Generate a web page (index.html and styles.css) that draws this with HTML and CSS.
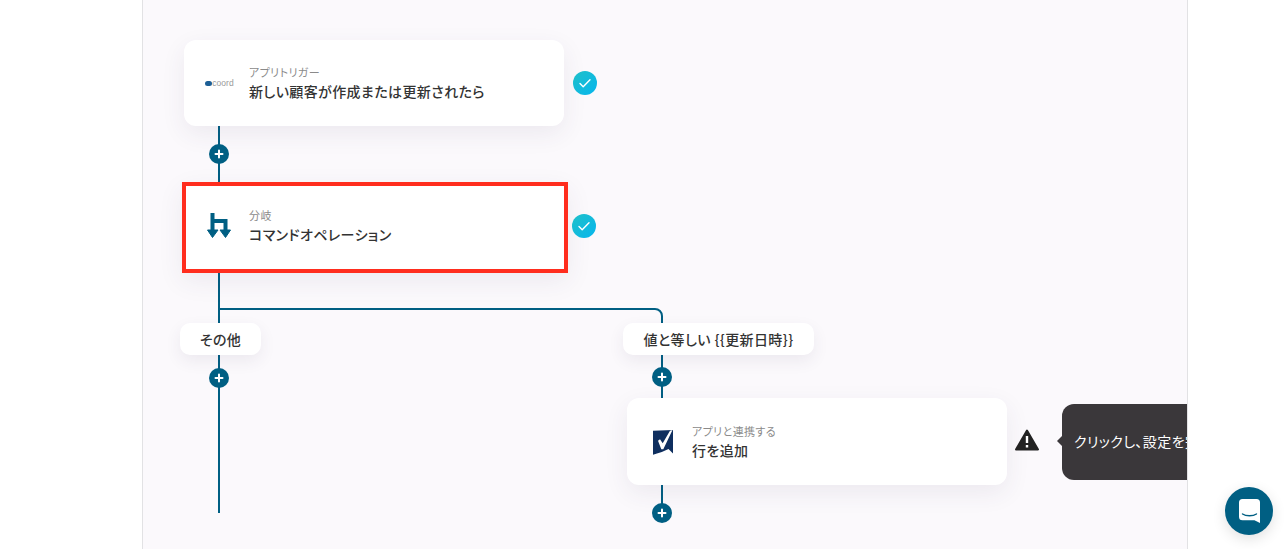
FILE: index.html
```html
<!DOCTYPE html>
<html lang="ja">
<head>
    <meta charset="UTF-8">
    <title>フローボット</title>
    <link rel="stylesheet" href="styles.css">
</head>
<body>
    <main class="canvas">
        <!-- Lineas de conexion -->
        <svg class="wires" width="1046" height="549" viewBox="0 0 1046 549" fill="none">
            <path d="M77 126V513" stroke="#005f83" stroke-width="2"/>
            <path d="M77 309H513a7 7 0 0 1 7 7V513" stroke="#005f83" stroke-width="2"/>
        </svg>

        <div class="card card-trigger">
            <div class="card-icon">
                <svg width="7" height="5" viewBox="0 0 7 5"><rect width="7" height="5" rx="2.5" fill="#1d5f96"/></svg>
                <span class="coord-logo">coord</span>
            </div>
            <div class="card-text">
                <span class="card-label">アプリトリガー</span>
                <span class="card-title">新しい顧客が作成または更新されたら</span>
            </div>
        </div>
        <span class="check check-trigger">
            <svg width="14" height="14" viewBox="0 0 14 14" fill="none"><path d="M2 7.5l3.2 3.2 6.8-7" stroke="#fff" stroke-width="1.4" stroke-linecap="round" stroke-linejoin="round"/></svg>
        </span>

        <span class="plus plus-a"><svg width="10" height="10" viewBox="0 0 10 10"><path d="M5 1.5v7M1.5 5h7" stroke="#fff" stroke-width="2" stroke-linecap="round"/></svg></span>

        <div class="card card-branch">
            <div class="card-icon">
                <svg width="24" height="25" viewBox="0 0 24 25" fill="#005f83">
                    <path d="M3.5 0h4v6H20.5v12h-4V10h-9v8h-4z"/>
                    <path d="M0.5 17h10.500L5.500 24.500zM13 17h10.500L18.500 24.500z" stroke="#005f83" stroke-linejoin="round"/>
                </svg>
            </div>
            <div class="card-text">
                <span class="card-label">分岐</span>
                <span class="card-title">コマンドオペレーション</span>
            </div>
        </div>
        <span class="check check-branch">
            <svg width="14" height="14" viewBox="0 0 14 14" fill="none"><path d="M2 7.5l3.2 3.2 6.8-7" stroke="#fff" stroke-width="1.4" stroke-linecap="round" stroke-linejoin="round"/></svg>
        </span>

        <span class="pill pill-other">その他</span>
        <span class="pill pill-value">値と等しい {{更新日時}}</span>

        <span class="plus plus-b"><svg width="10" height="10" viewBox="0 0 10 10"><path d="M5 1.5v7M1.5 5h7" stroke="#fff" stroke-width="2" stroke-linecap="round"/></svg></span>
        <span class="plus plus-c"><svg width="10" height="10" viewBox="0 0 10 10"><path d="M5 1.5v7M1.5 5h7" stroke="#fff" stroke-width="2" stroke-linecap="round"/></svg></span>

        <div class="card card-sheet">
            <div class="card-icon">
                <svg width="20" height="25" viewBox="0 0 20 25">
                    <path d="M0 .8L20 0V23.500L15.500 19Q8 23 0 24.700Z" fill="#0f2f5f"/>
                    <path d="M5 10.700L7 9.300L9.700 13.300L17 .7L19.500 0L10.300 19.300H8.300Z" fill="#fff"/>
                </svg>
            </div>
            <div class="card-text">
                <span class="card-label">アプリと連携する</span>
                <span class="card-title">行を追加</span>
            </div>
        </div>

        <span class="plus plus-d"><svg width="10" height="10" viewBox="0 0 10 10"><path d="M5 1.5v7M1.5 5h7" stroke="#fff" stroke-width="2" stroke-linecap="round"/></svg></span>

        <svg class="warn" width="24" height="22" viewBox="0 0 24 22">
            <path d="M12 1.5L23 20.5H1Z" fill="#222" stroke="#222" stroke-width="2" stroke-linejoin="round"/>
            <path d="M12 7v7M12 16v2.4" stroke="#fff" stroke-width="2.4"/>
        </svg>
        <div class="tip">クリックし、設定を完了してください</div>
    </main>

    <button class="chat" type="button" aria-label="チャット">
        <svg width="21" height="24" viewBox="0 0 21 24">
            <path d="M3.500 0h14a3.500 3.500 0 0 1 3.500 3.500V24l-5.500-2.800H3.500a3.500 3.500 0 0 1-3.500-3.500V3.500A3.500 3.500 0 0 1 3.500 0z" fill="#fff"/>
            <path d="M3.500 15c3.500 2.400 10.500 2.400 14 0" fill="none" stroke="#005f83" stroke-width="1.4" stroke-linecap="round"/>
        </svg>
    </button>
</body>
</html>
```

FILE: styles.css
```css
html, body {
    margin: 0;
    height: 100%;
}

body {
    position: relative;
    width: 1284px;
    height: 549px;
    overflow: hidden;
    background-color: #ffffff;
    font-family: "Noto Sans CJK JP", "Noto Sans", sans-serif;
    font-feature-settings: "palt";
    letter-spacing: 0.4px;
    color: #333;
}

/* Lienzo del flujo */
.canvas {
    position: absolute;
    left: 142px;
    top: 0;
    width: 1046px;
    height: 549px;
    box-sizing: border-box;
    overflow: hidden;
    background-color: #fbf9fc;
    border-left: 1px solid #e2e2e4;
    border-right: 1px solid #e2e2e4;
}

.wires {
    position: absolute;
    left: -1px;
    top: 0;
}

/* Tarjetas */
.card {
    position: absolute;
    width: 380px;
    height: 86px;
    display: flex;
    align-items: center;
    box-sizing: border-box;
    background-color: #fff;
    border-radius: 12px;
    box-shadow: 0 8px 24px rgba(60, 50, 90, 0.08);
}

.card-trigger {
    left: 41px;
    top: 40px;
}

.card-branch {
    left: 39px;
    top: 182px;
    width: 386px;
    height: 91px;
    border: 4px solid #ff2d1e;
    border-radius: 0;
}

.card-sheet {
    left: 484px;
    top: 398px;
    height: 87px;
}

.card-icon {
    width: 65px;
    box-sizing: border-box;
    padding-left: 6px;
    display: flex;
    align-items: center;
    justify-content: center;
    flex-shrink: 0;
}

.card-branch .card-icon {
    width: 63px;
    padding-left: 3px;
    padding-bottom: 4px;
}

.card-sheet .card-icon {
    padding-top: 2px;
}

.card-text {
    display: flex;
    flex-direction: column;
    gap: 2px;
    margin-bottom: 1px;
}

.card-branch .card-text {
    margin-bottom: 4px;
}

.card-label {
    font-size: 11px;
    line-height: 16px;
    color: #8a8a8a;
}

.card-title {
    font-size: 14px;
    line-height: 19px;
    font-weight: 500;
    color: #333;
}

.coord-logo {
    font-family: "Liberation Sans", sans-serif;
    font-size: 8.5px;
    letter-spacing: 0;
    color: #999;
}

/* Check */
.check {
    position: absolute;
    width: 24px;
    height: 24px;
    display: flex;
    align-items: center;
    justify-content: center;
    border-radius: 50%;
    background: linear-gradient(135deg, #1fc0c8, #06b6ee);
}

.check-trigger {
    left: 430px;
    top: 71px;
}

.check-branch {
    left: 429px;
    top: 214px;
}

/* Boton de agregar */
.plus {
    position: absolute;
    width: 20px;
    height: 20px;
    display: flex;
    align-items: center;
    justify-content: center;
    border-radius: 50%;
    background-color: #005f83;
}

.plus-a { left: 66px; top: 144px; }
.plus-b { left: 66px; top: 368px; }
.plus-c { left: 509px; top: 367px; }
.plus-d { left: 509px; top: 503px; }

/* Etiquetas de rama */
.pill {
    position: absolute;
    height: 32px;
    display: flex;
    align-items: center;
    justify-content: center;
    background-color: #fff;
    border-radius: 10px;
    font-size: 14px;
    font-weight: 500;
    color: #333;
    box-shadow: 0 6px 16px rgba(60, 50, 90, 0.08);
}

.pill-other {
    left: 37px;
    top: 323px;
    width: 81px;
}

.pill-value {
    left: 480px;
    top: 323px;
    width: 191px;
}

.warn {
    position: absolute;
    left: 872px;
    top: 429px;
}

/* Aviso */
.tip {
    position: absolute;
    left: 919px;
    top: 404px;
    width: 260px;
    height: 76px;
    box-sizing: border-box;
    display: flex;
    align-items: center;
    padding-left: 12px;
    padding-bottom: 2px;
    white-space: nowrap;
    background-color: #3a373a;
    border-radius: 12px;
    font-size: 14px;
    color: #fff;
}

.tip::before {
    content: "";
    position: absolute;
    left: -5px;
    top: 32px;
    width: 0;
    height: 0;
    border-top: 5px solid transparent;
    border-bottom: 5px solid transparent;
    border-right: 5px solid #3a373a;
}

/* Chat */
.chat {
    position: absolute;
    left: 1225px;
    top: 487px;
    width: 48px;
    height: 48px;
    display: flex;
    align-items: center;
    justify-content: center;
    padding: 0;
    border: none;
    border-radius: 50%;
    background-color: #005f83;
    box-shadow: 0 4px 14px rgba(0, 0, 0, 0.12);
}
```
